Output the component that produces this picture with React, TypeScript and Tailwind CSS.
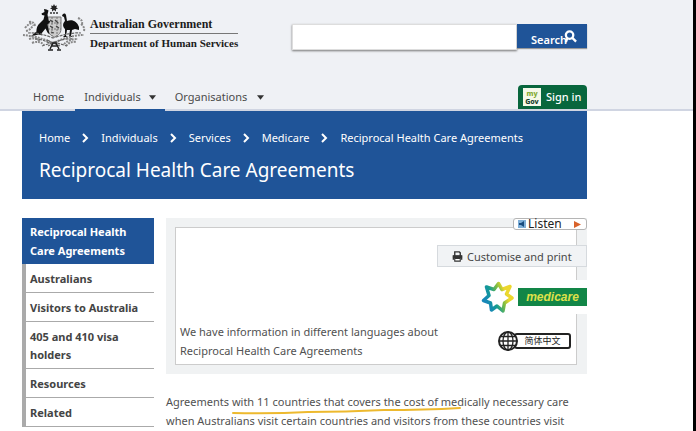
import React from "react";

const crumbs = ["Home", "Individuals", "Services", "Medicare", "Reciprocal Health Care Agreements"];
const sideLinks = ["Australians", "Visitors to Australia", "405 and 410 visa holders", "Resources", "Related"];

function Crest() {
  return (
    <svg viewBox="0 0 64 48" className="h-12 w-16 shrink-0" role="img" aria-label="Commonwealth coat of arms">
      <path d="M32 0l1 2 2-.6-.8 2 1.800 1.200-2.100.600.100 2.200L32 6l-2 1.400.100-2.200-2.100-.600 1.800-1.200L29 1.400l2 .600z" fill="#222" />
      <path d="M28 9h8" stroke="#333" strokeWidth="1.500" strokeDasharray="2 1" />
      <path d="M26 13h13v12c0 5-4 7-6.500 8-2.500-1-6.500-3-6.500-8z" fill="#ccc" stroke="#777" />
      <path d="M26 19h13M26 25h13M30 13v19M35 13v19" stroke="#777" strokeDasharray="2 1" />
      <path d="M28 16l3 2m2-2l3 3m-8 3l3 2m3-2l3 2m-8 4l3 1" stroke="#444" strokeWidth="1.200" />
      <path d="M22 5l.5 3-3 1.500 .5 1.500 2.500.500-1 4-4 4c-3 3-3 6-3 8l-6 5 8-2 4 1-1-2 4-5 2 4 2 2-1-5-1-5 3-3-2-1-1-6 1-4-2-1z" fill="#111" />
      <path d="M40 12c1-3 3-3 4-1l1 6c5-2 10 0 12 6l0 3-4-1-3 1-1 6 3 1h-5l1-7-3 0-1 6 2 1h-5l2-2 0-6c-3-3-2-6 0-8l-1-4z" fill="#111" />
      <path d="M7 18q5-1 6 4M3 24q4-5 8-5m-7 8q5-1 7-6M56 14q5 2 4 6" fill="none" stroke="#888" strokeWidth="2" strokeDasharray="2 1" />
      <path d="M1 31q14 1 30 8 17-8 31-8M7 35q8-2 11 3m-8 1q8-3 12 2m20-1q5-5 14-5m-12 7q4-5 10-4M59 20q4 3 3 7" fill="none" stroke="#888" strokeWidth="2" strokeDasharray="2 1" />
      <path d="M6 29q10-1 25 5 18-6 28-5M13 35q8 0 16 5 12-6 22-5M20 42l12-4 13 4M25 36l13 6M39 36l-13 6" fill="none" stroke="#666" strokeWidth="1.200" strokeDasharray="3 1" />
      <path d="M28 45l3-6h3l3 6M26 46h5m4 0h4M29 42h7" fill="none" stroke="#222" strokeWidth="1.500" />
    </svg>
  );
}

function Caret() {
  return (
    <svg viewBox="0 0 8 5" className="h-[5px] w-[7px]" aria-hidden="true">
      <path d="M0 0h8L4 5z" fill="#333" />
    </svg>
  );
}

function Header() {
  return (
    <header className="border-b-2 border-[#d0d5e2] bg-[#eff1f5]">
      <div className="max-w-[587px] pl-[22px]">
        <div className="flex items-start">
          <div className="flex items-start gap-1 pt-1">
            <Crest />
            <div className="mt-[11px] whitespace-nowrap font-['Liberation_Serif',serif] font-bold leading-[18px] text-[#1c1c1c]">
              <div className="border-b border-[#777] text-[12px]">Australian Government</div>
              <div className="text-[11px]">Department of Human Services</div>
            </div>
          </div>
          <form className="ml-auto mt-6 flex w-[295px]" onSubmit={(e) => e.preventDefault()}>
            <input type="text" aria-label="Search" className="h-[26px] min-w-0 flex-1 border border-[#ddd] bg-white px-2 text-xs shadow-[0_1px_2px_#777] outline-none" />
            <button type="submit" className="relative flex h-6 w-[70px] items-end bg-[#1f5498] pl-[14px] text-[11px] font-semibold leading-4 text-white shadow-[0_1px_1px_#999]">
              Search
              <svg viewBox="0 0 14 14" className="absolute right-[10px] top-[6px] size-[13px]" aria-hidden="true">
                <circle cx="6" cy="5.500" r="4" fill="none" stroke="#fff" strokeWidth="2.500" />
                <path d="M9 8.500l4 4M3.500 9L2 13" stroke="#fff" strokeWidth="2.500" />
              </svg>
            </button>
          </form>
        </div>
        <div className="mt-[31px] flex items-end">
          <nav aria-label="Main" className="-mb-[2px] flex h-7 text-[11px] text-[#4b4b4b]">
            <a href="#home" className="flex items-center border-b-2 border-transparent px-[11px] pt-[2px]">Home</a>
            <a href="#individuals" className="flex items-center gap-2 border-b-2 border-[#1f5498] px-[9px] pt-[2px]">Individuals <Caret /></a>
            <a href="#organisations" className="flex items-center gap-[10px] border-b-2 border-transparent px-[10px] pt-[2px]">Organisations <Caret /></a>
          </nav>
          <a href="#signin" className="ml-auto flex h-6 w-[69px] items-center gap-[5px] rounded-t-sm bg-[#08663d] pl-[5px] text-[11px] font-medium text-white">
            <span className="flex h-[18px] w-[18px] flex-col justify-end bg-[#f5f8e9] text-center text-[7px] font-extrabold leading-[8px] text-[#17402c]">
              <span className="text-[#7fa930]">my</span>
              <span>Gov</span>
            </span>
            Sign in
          </a>
        </div>
      </div>
    </header>
  );
}

function Banner() {
  return (
    <div className="h-[88px] bg-[#1f5498] pl-[17px] pt-[18px] text-white">
      <nav aria-label="Breadcrumb">
        <ol className="flex items-center whitespace-nowrap text-[11px] leading-[18px]">
          {crumbs.map((c, i) => (
            <li key={c} className="flex items-center">
              {i > 0 && (
                <svg viewBox="0 0 7 10" className="mx-3 h-[10px] w-[7px]" aria-hidden="true">
                  <path d="M1 1l4 4-4 4" fill="none" stroke="#fff" strokeWidth="2" />
                </svg>
              )}
              <a href="#crumb">{c}</a>
            </li>
          ))}
        </ol>
      </nav>
      <h1 className="mt-[10px] whitespace-nowrap text-[19px] leading-[26px]">Reciprocal Health Care Agreements</h1>
    </div>
  );
}

function Sidebar() {
  return (
    <nav aria-label="Section" className="w-[132px] shrink-0 text-[11px] font-bold leading-[19px] text-[#444]">
      <a href="#rhca" className="block bg-[#1f5498] py-1 pl-2 pr-4 text-white">Reciprocal Health Care Agreements</a>
      <ul className="border-l-4 border-[#aaa]">
        {sideLinks.map((l) => (
          <li key={l} className="border-b border-[#aaa]">
            <a href="#section" className="block pb-1 pl-1 pr-2 pt-[6px] leading-[18px]">{l}</a>
          </li>
        ))}
      </ul>
    </nav>
  );
}

function MedicareLogo() {
  return (
    <div className="flex items-center gap-1" role="img" aria-label="Medicare">
      <svg viewBox="0 0 34 34" className="size-[34px]" aria-hidden="true">
        <defs>
          <linearGradient id="star" x1="0" y1="0.700" x2="1" y2="0.300">
            <stop offset="0.100" stopColor="#1787b8" />
            <stop offset="0.350" stopColor="#139b93" />
            <stop offset="0.600" stopColor="#7cbc44" />
            <stop offset="0.800" stopColor="#ecd72d" />
          </linearGradient>
        </defs>
        <path
          d="M18.500 3.500L22 9.500L30 6.500L26.500 14L32 18L24.500 23L23 31L17 26L11.500 30L10.500 23L3.500 20.500L9 15.500L6.500 7L14 9.500z"
          fill="#fff"
          stroke="url(#star)"
          strokeWidth="3.500"
          strokeLinejoin="round"
        />
      </svg>
      <span className="flex h-[18px] w-[69px] items-center justify-center bg-[#128647] font-['Liberation_Sans',sans-serif] text-[12px] font-bold italic text-[#dfe04a]">medicare</span>
    </div>
  );
}

function Tools() {
  return (
    <div className="absolute right-0 top-0 flex flex-col items-end">
      <button type="button" className="flex h-3 w-[74px] items-center rounded-[3px] border border-[#b5b5b5] bg-white pl-1 text-[12px] leading-3 text-[#222]">
        <svg viewBox="0 0 8 8" className="mr-[2px] size-2" aria-hidden="true">
          <path d="M0 0h8v8H0z" fill="#7eafd8" />
          <path d="M1 3h2l3-2v6L3 5H1z" fill="#174b7e" />
        </svg>
        Listen
        <svg viewBox="0 0 7 7" className="ml-auto mr-[5px] size-[7px]" aria-hidden="true">
          <path d="M0 0l7 3.500L0 7z" fill="#d9632c" />
        </svg>
      </button>
      <button type="button" className="mt-[15px] flex h-[22px] w-[150px] items-center gap-1 border border-[#d6dade] bg-[#f1f3f5] pl-[14px] text-[11px] text-[#484848]">
        <svg viewBox="0 0 12 12" className="size-[11px]" aria-hidden="true">
          <path d="M3 5V1h5l1 1v3M1.500 9.500v-4h9v4" fill="none" stroke="#333" strokeWidth="1.500" />
          <path d="M1 5h10v3H1z" fill="#333" />
          <path d="M3 8h6v3H3z" fill="#fff" stroke="#333" strokeWidth="1.200" />
        </svg>
        Customise and print
      </button>
      <div className="mt-[13px] bg-white"><MedicareLogo /></div>
      <a href="#chinese" className="mr-4 mt-[17px] flex items-center">
        <svg viewBox="0 0 20 20" className="z-10 size-5" aria-hidden="true">
          <circle cx="10" cy="10" r="9" fill="#fff" stroke="#222" strokeWidth="2" />
          <path d="M10 1v18M1 10h18M3 5.500h14M3 14.500h14" stroke="#222" strokeWidth="1.300" />
          <ellipse cx="10" cy="10" rx="5" ry="9" fill="none" stroke="#222" strokeWidth="1.300" />
        </svg>
        <span className="-ml-1 flex h-4 w-[57px] items-center justify-center rounded-[3px] border-2 border-[#222] bg-white font-['Noto_Sans_CJK_SC',sans-serif] text-[9px] leading-3 text-[#222]">简体中文</span>
      </a>
    </div>
  );
}

export default function App() {
  return (
    <div className="h-screen overflow-hidden border-r-[3px] border-black bg-white font-['Noto_Sans',sans-serif]">
      <Header />
      <div className="max-w-[587px] pl-[22px]">
        <Banner />
        <div className="mt-[19px] flex gap-3">
          <Sidebar />
          <main className="min-w-0 flex-1 text-[11px] leading-[19px] text-[#515151]">
            <section className="relative bg-[#f0f2f3] p-[9px] pr-[10px]">
              <div className="flex h-[138px] items-end border border-[#ccc] bg-white px-1 pb-1">
                <p>We have information in different languages about<br />Reciprocal Health Care Agreements</p>
              </div>
              <Tools />
            </section>
            <div className="relative mt-[18px] whitespace-nowrap">
              <p>Agreements with 11 countries that covers the cost of medically necessary care<br />when Australians visit certain countries and visitors from these countries visit</p>
              <svg viewBox="0 0 230 8" className="absolute left-[66px] top-[15px] h-2 w-[230px]" aria-hidden="true">
                <path d="M1 6q40 1 75-1 38 0 76-2 40 0 76-2" fill="none" stroke="#edb92e" strokeWidth="2" strokeLinecap="round" />
              </svg>
            </div>
          </main>
        </div>
      </div>
    </div>
  );
}
